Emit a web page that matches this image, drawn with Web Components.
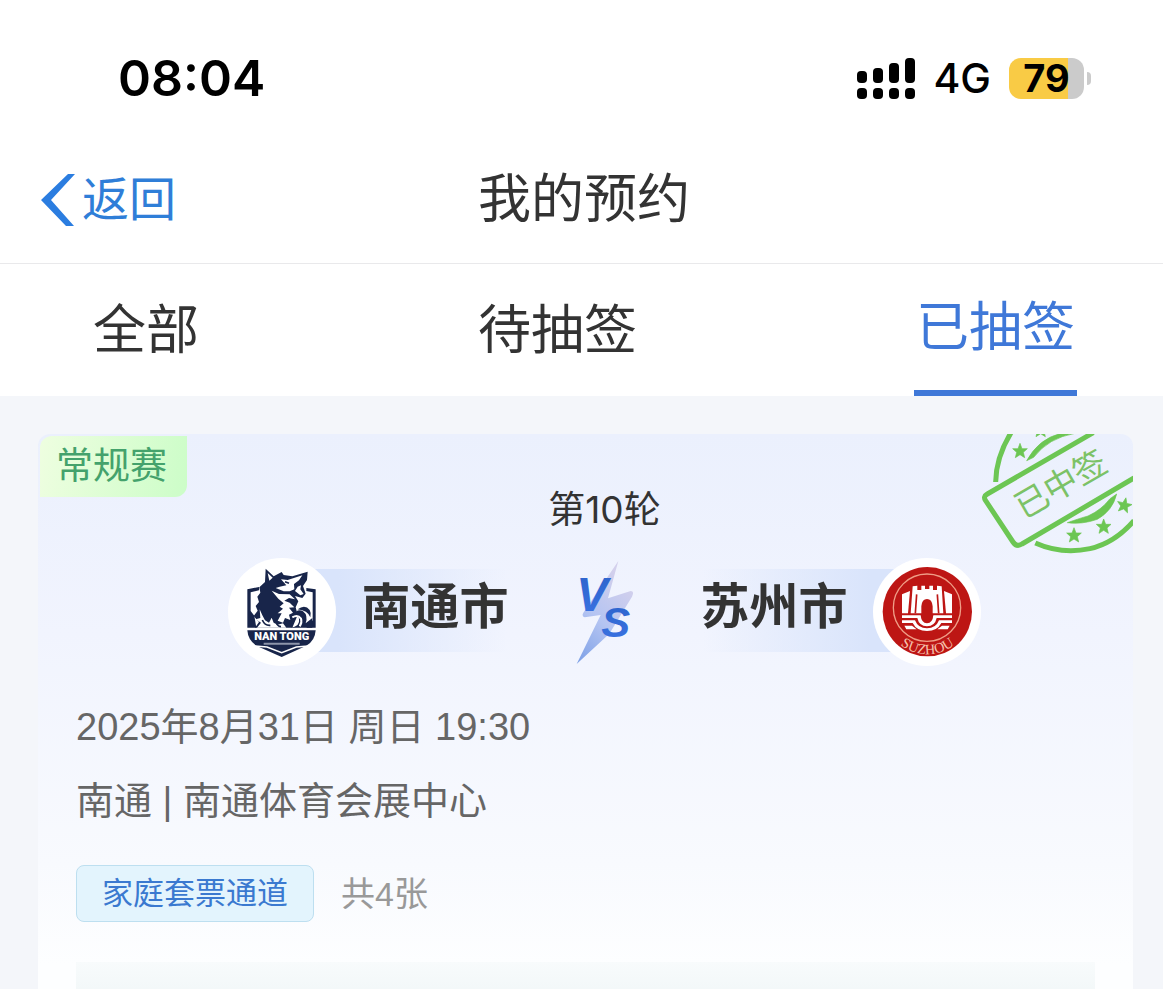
<!DOCTYPE html>
<html lang="zh-CN">
<head>
<meta charset="utf-8">
<meta name="viewport" content="width=device-width, initial-scale=1">
<title>我的预约</title>
<style>
  html, body { height: 100%; }
  body {
    margin: 0;
    background: #f4f6fa;
    color: #333;
    font-family: "Liberation Sans", "Noto Sans CJK SC", sans-serif;
  }
</style>
</head>
<body>
<booking-page>
  <status-bar slot="top" time="08:04" network="4G" battery="79"></status-bar>
  <nav-bar slot="top" back="返回">我的预约</nav-bar>
  <tab-bar slot="top" tabs="全部,待抽签,已抽签" active="2"></tab-bar>
  <match-card>
    <span slot="tag">常规赛</span>
    <win-stamp slot="stamp"></win-stamp>
    <span slot="round">第10轮</span>
    <team-side slot="home" name="南通市"><nantong-logo></nantong-logo></team-side>
    <team-side slot="away" name="苏州市" reverse><suzhou-logo></suzhou-logo></team-side>
    <span slot="time">2025年8月31日 周日 19:30</span>
    <span slot="venue">南通 | 南通体育会展中心</span>
    <span slot="channel">家庭套票通道</span>
    <span slot="count">共4张</span>
  </match-card>
</booking-page>

<script>
class BaseElement extends HTMLElement {
  constructor() {
    super();
    this.attachShadow({ mode: 'open' });
  }

  connectedCallback() {
    this.shadowRoot.innerHTML = this.render();
  }
}

class BookingPage extends BaseElement {
  render() {
    return `
      <style>
        :host { display: flex; flex-direction: column; min-height: 100%; }
        header { background: #fff; }
        main { flex: 1; display: flex; flex-direction: column; padding: 38px 30px 0 38px; }
      </style>
      <header><slot name="top"></slot></header>
      <main><slot></slot></main>
    `;
  }
}

class StatusBar extends BaseElement {
  render() {
    return `
      <style>
        :host {
          display: flex;
          align-items: center;
          justify-content: space-between;
          padding: 48px 72px 24px 118px;
          line-height: 60px;
          color: #000;
          font-family: Inter, sans-serif;
        }
        .time { font-size: 50px; font-weight: 600; }
        .right { display: flex; align-items: center; gap: 18px; }
        .network { font-size: 41px; font-weight: 500; }
        .battery { display: flex; align-items: center; gap: 3px; }
        .level {
          width: 75px;
          border-radius: 12px;
          background: linear-gradient(90deg, #f9cb45 79%, #cbcbcb 79%);
          font-size: 38px;
          font-weight: 700;
          line-height: 41px;
          text-align: center;
        }
        .cap { width: 4px; height: 13px; border-radius: 0 5px 5px 0; background: #cbcbcb; }
        svg { display: block; }
      </style>
      <span class="time">${this.getAttribute('time')}</span>
      <div class="right">
        <svg width="58" height="41" viewBox="0 0 58 41" aria-hidden="true">
          <rect x="0" y="13" width="10" height="12" rx="4"/>
          <rect x="16" y="10" width="10" height="15" rx="4"/>
          <rect x="32" y="5" width="10" height="20" rx="4"/>
          <rect x="48" y="0" width="10" height="25" rx="4"/>
          <rect x="0" y="30" width="10" height="11" rx="4"/>
          <rect x="16" y="30" width="10" height="11" rx="4"/>
          <rect x="32" y="30" width="10" height="11" rx="4"/>
          <rect x="48" y="30" width="10" height="11" rx="4"/>
        </svg>
        <span class="network">${this.getAttribute('network')}</span>
        <div class="battery">
          <span class="level">${this.getAttribute('battery')}</span>
          <span class="cap"></span>
        </div>
      </div>
    `;
  }
}

class NavBar extends BaseElement {
  render() {
    return `
      <style>
        :host {
          display: grid;
          grid-template-columns: 1fr auto 1fr;
          align-items: center;
          padding: 32px 36px 27px 41px;
          border-bottom: 1px solid #e9e9eb;
          line-height: 72px;
        }
        button {
          display: flex;
          align-items: center;
          justify-self: start;
          gap: 7px;
          padding: 0;
          border: 0;
          background: none;
          color: #2f7ed8;
          font: inherit;
          font-size: 47px;
          cursor: pointer;
        }
        h1 { margin: 0; font-size: 53px; font-weight: 400; }
      </style>
      <button type="button">
        <svg width="34" height="52" viewBox="0 0 34 52" aria-hidden="true">
          <path d="M27 0h7L10 26l23 26h-8L0 26z" fill="#2b7de0"/>
        </svg>
        ${this.getAttribute('back')}
      </button>
      <h1><slot></slot></h1>
    `;
  }
}

class TabBar extends BaseElement {
  render() {
    const active = Number(this.getAttribute('active'));
    const tabs = this.getAttribute('tabs').split(',').map((label, i) => `
      <button type="button" role="tab" aria-selected="${i === active}">${label}</button>
    `).join('');
    return `
      <style>
        :host { display: block; }
        div {
          display: flex;
          justify-content: space-between;
          padding: 0 86px 0 91px;
        }
        button {
          padding: 2px 2px 0;
          border: 0;
          background: none;
          color: #333;
          font: inherit;
          font-size: 53px;
          line-height: 124px;
          cursor: pointer;
        }
        button[aria-selected="true"] {
          border-bottom: 6px solid #3f78d8;
          color: #3f78d8;
        }
      </style>
      <div role="tablist">${tabs}</div>
    `;
  }
}

class MatchCard extends BaseElement {
  render() {
    return `
      <style>
        :host {
          position: relative;
          flex: 1;
          display: flex;
          flex-direction: column;
          padding: 51px 38px 0;
          border-radius: 12px 12px 0 0;
          background: linear-gradient(180deg, #ebf0fd 0, #f1f4fe 200px, #f8fafe 430px, #fdfeff 530px);
        }
        .tag {
          position: absolute;
          top: 2px;
          left: 2px;
          padding: 0 20px 0 16px;
          border-radius: 12px 0 12px 0;
          background: linear-gradient(100deg, #eefee0, #ccfdc8);
          color: #44a26c;
          font-size: 37px;
          line-height: 61px;
        }
        .stamp { position: absolute; top: 0; right: 0; }
        /* the fixture is centred on the area right of the text inset */
        .fixture {
          display: flex;
          flex-direction: column;
          align-items: center;
          gap: 23px;
          margin-right: -38px;
        }
        .round { font-family: Inter, "Noto Sans CJK SC", sans-serif; font-size: 37px; line-height: 50px; }
        .teams { display: flex; align-items: center; gap: 67px; }
        .info {
          margin-top: 24px;
          color: #666;
          font-size: 38px;
          line-height: 74px;
        }
        .ticket { display: flex; align-items: center; gap: 27px; margin-top: 27px; }
        .channel {
          padding: 0 25px;
          border: 1px solid #bddff0;
          border-radius: 8px;
          background: #e3f4fd;
          color: #3a79d0;
          font-size: 31px;
          line-height: 55px;
        }
        .count { color: #999; font-size: 34px; line-height: 48px; }
        .panel {
          flex: 1;
          min-height: 20px;
          margin-top: 40px;
          background: linear-gradient(180deg, #f8fbfc, #f3f8f9);
        }
      </style>
      <div class="tag"><slot name="tag"></slot></div>
      <div class="stamp"><slot name="stamp"></slot></div>
      <div class="fixture">
        <div class="round"><slot name="round"></slot></div>
        <div class="teams">
          <slot name="home"></slot>
          <versus-mark></versus-mark>
          <slot name="away"></slot>
        </div>
      </div>
      <div class="info">
        <div><slot name="time"></slot></div>
        <div><slot name="venue"></slot></div>
      </div>
      <div class="ticket">
        <span class="channel"><slot name="channel"></slot></span>
        <span class="count"><slot name="count"></slot></span>
      </div>
      <div class="panel"></div>
    `;
  }
}

class TeamSide extends BaseElement {
  render() {
    return `
      <style>
        /* the colour band starts behind the middle of the badge and fades out */
        :host {
          display: flex;
          align-items: center;
          gap: 25px;
          background: linear-gradient(90deg, #d9e4fb 20%, #d9e4fb00 80%) 54px 11px / 100% 83px no-repeat;
        }
        :host([reverse]) {
          flex-direction: row-reverse;
          background-image: linear-gradient(270deg, #d9e4fb 20%, #d9e4fb00 80%);
          background-position: -54px 11px;
        }
        .logo {
          width: 108px;
          height: 108px;
          border-radius: 50%;
          background: #fff;
          overflow: hidden;
        }
        .name { padding-bottom: 10px; font-size: 49px; font-weight: 700; line-height: 70px; }
      </style>
      <div class="logo"><slot></slot></div>
      <span class="name">${this.getAttribute('name')}</span>
    `;
  }
}

class VersusMark extends BaseElement {
  render() {
    return `
      <style>
        :host { display: block; }
        svg { display: block; }
        text { font-family: "Liberation Sans", sans-serif; font-weight: 700; font-style: italic; }
      </style>
      <svg width="58" height="103" viewBox="108 240 174 309" role="img" aria-label="VS">
        <defs>
          <linearGradient id="bolt" x1="0" y1="1" x2="0.5" y2="0">
            <stop offset="0" stop-color="#7b9fe6"/>
            <stop offset="0.5" stop-color="#b4c4f2"/>
            <stop offset="1" stop-color="#d3d0ec"/>
          </linearGradient>
          <linearGradient id="ink" x1="0" y1="0" x2="0" y2="1">
            <stop offset="0" stop-color="#2b62c9"/>
            <stop offset="1" stop-color="#3c74e4"/>
          </linearGradient>
        </defs>
        <path d="M235 240L204 352L272 330Q284 330 276 347L208 458L110 549L182 402L134 409Q124 406 130 395Z" fill="url(#bolt)"/>
        <text x="109" y="390" font-size="142" fill="url(#ink)">V</text>
        <text x="184" y="467" font-size="130" fill="url(#ink)">S</text>
      </svg>
    `;
  }
}

class NantongLogo extends BaseElement {
  render() {
    return `
      <style>
        :host { display: block; }
        svg { display: block; }
        text { font-family: Roboto, sans-serif; font-weight: 900; }
      </style>
      <svg width="108" height="108" viewBox="27 39 324 324" role="img" aria-label="NAN TONG">
        <g fill="#18254a">
          <path d="M85 133L120 126V136L95 142V198L106 212L112 248H85ZM262 129L290 133V248H262L281 226V142L262 138Z"/>
          <path d="M85 256H290Q288 288 262 302L188 336L112 302Q87 286 85 256Z"/>
        </g>
        <g transform="translate(60 45)">
          <path d="M80 26L104 49L128 36L134 45L160 49L206 35L204 60L192 78L200 101L190 114L168 108L178 124L170 142L176 165L160 203H48L60 186L44 168L56 152L50 138L60 126L55 110L64 98L61 82L78 66Z" fill="#18254a"/>
          <g fill="#fff">
            <path d="M86 39L101 53L91 62Z"/>
            <path d="M126 58L146 60L190 46L180 61L165 72L166 88L152 94L134 94L110 84L122 80L142 76Z"/>
            <path d="M168 93L176 80L186 76L184 88L194 102L184 106Z"/>
            <path d="M98 92L120 102L152 103L168 118L150 114L136 122L152 128L166 142L150 143L162 158L150 164L154 180L138 174L132 188L116 182L128 160L116 160L132 146L122 140L134 130L118 116Z"/>
            <path d="M62 148L70 166L78 181L90 188L98 173L104 188L116 194L132 190L142 203H54L66 188L50 178L64 174Z"/>
          </g>
          <path d="M70 180Q78 198 94 196M112 187Q114 198 126 200M138 65L150 70" fill="none" stroke="#18254a" stroke-width="5"/>
          <path d="M154 203Q184 200 180 176Q176 162 162 168Q174 144 192 154Q208 166 200 190L220 174V203Z" fill="#18254a"/>
          <path d="M160 172Q176 162 186 176Q190 188 182 199" fill="none" stroke="#fff" stroke-width="6"/>
          <path d="M176 148Q198 132 212 150Q218 160 214 172Q206 151 176 148Z" fill="#18254a"/>
        </g>
        <path d="M85 252H290" stroke="#fff" stroke-width="4"/>
        <text x="188" y="286" font-size="33" fill="#fff" text-anchor="middle">NAN TONG</text>
        <path d="M134 296H242" stroke="#8c95aa" stroke-width="6"/>
        <path d="M108 303L144 306L188 323L232 306L268 303" fill="none" stroke="#fff" stroke-width="5"/>
      </svg>
    `;
  }
}

class SuzhouLogo extends BaseElement {
  render() {
    return `
      <style>
        :host { display: block; }
        svg { display: block; }
        text { font-family: "Liberation Serif", serif; }
      </style>
      <svg width="108" height="108" viewBox="129 39 324 324" role="img" aria-label="SUZHOU">
        <circle cx="292" cy="200" r="134" fill="#bd1614"/>
        <circle cx="291" cy="188" r="101" fill="none" stroke="#ef9d86" stroke-width="4"/>
        <g fill="#fff">
          <path d="M216 148L240 138L234 205H216Z"/>
          <path d="M366 148L342 138L348 205H366Z"/>
          <path d="M248 124L262 122V135H274V122H285V132H298V122H309V135H321V122L335 124L340 205H308V184Q306 162 291 162Q276 162 274 184V205H242Z"/>
          <path d="M216 211H272Q274 234 291 235Q308 234 310 211H366V219H320Q315 243 291 244Q267 243 262 219H216Z"/>
          <path d="M216 226H255Q264 250 291 250Q318 250 327 226H366V234H334Q322 258 291 258Q260 258 248 234H216Z"/>
          <path d="M223 242H246L260 253H229ZM359 242H336L322 253H353Z"/>
        </g>
        <path d="M260 148L256 205M322 148L326 205" stroke="#bd1614" stroke-width="5"/>
        <path id="arc" d="M170 246A132 132 0 0 0 414 246" fill="none"/>
        <text font-size="43" fill="#f6c2ae" text-anchor="middle"><textPath href="#arc" startOffset="50%">SUZHOU</textPath></text>
      </svg>
    `;
  }
}

class WinStamp extends BaseElement {
  render() {
    const star = '<path d="M0-23L6-7L22-7L10 4L14 20L0 11L-14 20L-10 4L-22-7L-6-7Z"';
    return `
      <style>
        :host { display: block; }
        svg { display: block; }
        text { font-family: "Noto Sans CJK SC", sans-serif; font-weight: 400; }
      </style>
      <svg width="152" height="120" viewBox="63 42 456 360" role="img" aria-label="已中签">
        <g fill="none" stroke="#6cc653" stroke-width="15">
          <path d="M107 186Q108 112 153 38"/>
          <path d="M226 369Q304 404 390 386Q464 369 522 302"/>
          <path d="M400 38L82 222Q68 230 77 242L159 366Q170 382 186 372L522 174"/>
        </g>
        <g fill="#6cc653" stroke="#6cc653" stroke-width="2">
          <path d="M200 122Q236 56 303 40H345Q265 54 221 112Z"/>
          <path d="M322 308Q362 294 384 288Q424 270 450 236L470 222Q458 272 412 298Q366 314 322 308Z"/>
          ${star} transform="translate(180 93)"/>
          ${star} transform="translate(242 30)"/>
          ${star} transform="translate(342 346)"/>
          ${star} transform="translate(431 320)"/>
          ${star} transform="translate(493 256) rotate(12)"/>
        </g>
        <text x="0" y="36" font-size="100" fill="#7cc267" text-anchor="middle" transform="translate(302 192) rotate(-30)">已中签</text>
      </svg>
    `;
  }
}

customElements.define('booking-page', BookingPage);
customElements.define('status-bar', StatusBar);
customElements.define('nav-bar', NavBar);
customElements.define('tab-bar', TabBar);
customElements.define('match-card', MatchCard);
customElements.define('team-side', TeamSide);
customElements.define('versus-mark', VersusMark);
customElements.define('nantong-logo', NantongLogo);
customElements.define('suzhou-logo', SuzhouLogo);
customElements.define('win-stamp', WinStamp);
</script>
</body>
</html>
